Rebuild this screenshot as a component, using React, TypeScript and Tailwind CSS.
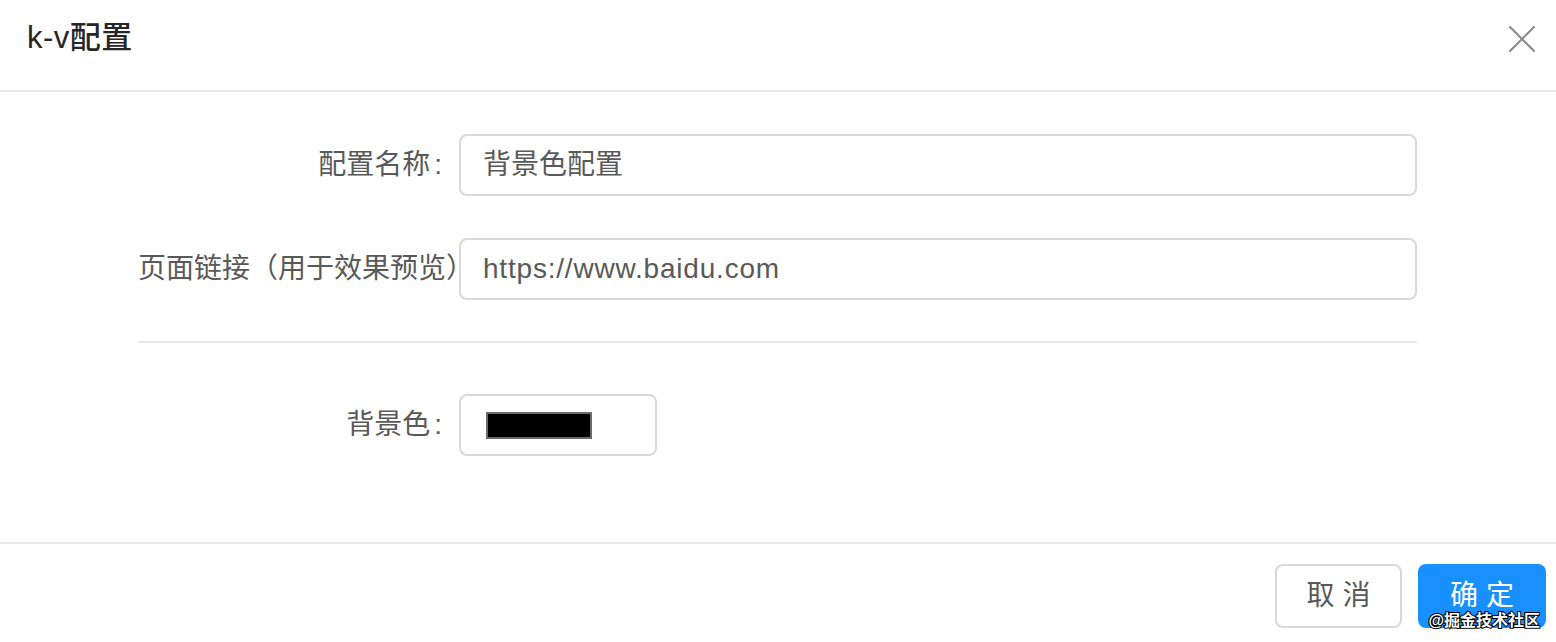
import { X } from "lucide-react";

const font = {
  fontFamily: '"Liberation Sans", "Noto Sans CJK SC", sans-serif',
};

function Label({ text, colon = true }: { text: string; colon?: boolean }) {
  return (
    <div className="w-[320px] shrink-0 whitespace-nowrap text-right text-[28px] leading-[62px] text-[#595959]">
      {text}
      {colon && <span className="ml-[4px] mr-[16px]">:</span>}
    </div>
  );
}

export default function App() {
  return (
    <div className="relative h-[642px] w-[1556px] bg-white" style={font}>
      {/* Header */}
      <div className="flex h-[92px] items-start justify-between border-b-2 border-[#e8e8e8] pl-[22px] pr-[10px]">
        <div className="flex h-[76px] items-center pl-[5px] text-[31px] font-medium tracking-[0.5px] text-[#262626]">
          k-v配置
        </div>
        <button className="mt-[15px] flex h-[48px] w-[48px] items-center justify-center text-[#8c8c8c]">
          <X size={48} strokeWidth={1.1} />
        </button>
      </div>

      {/* Body */}
      <div className="flex h-[450px] flex-col pl-[138px] pr-[139px] pt-[42px]">
        <div className="flex items-center">
          <Label text="配置名称" />
          <div className="ml-px flex h-[62px] flex-1 items-center rounded-[8px] border-2 border-[#d9d9d9] px-[22px] text-[28px] text-[#595959]">
            背景色配置
          </div>
        </div>

        <div className="mt-[42px] flex items-center">
          <Label text="页面链接（用于效果预览）" colon={false} />
          <div className="ml-px flex h-[62px] flex-1 items-center rounded-[8px] border-2 border-[#d9d9d9] px-[22px] text-[28px] tracking-[0.8px] text-[#595959]">
            https://www.baidu.com
          </div>
        </div>

        <div className="mt-[41px] h-[2px] bg-[#e8e8e8]" />

        <div className="mt-[51px] flex items-center">
          <Label text="背景色" />
          <div className="ml-px flex h-[62px] w-[198px] items-center rounded-[8px] border-2 border-[#d9d9d9] pl-[25px]">
            <div className="h-[27px] w-[106px] border-2 border-[#6b6b6b] bg-black" />
          </div>
        </div>
      </div>

      {/* Footer */}
      <div className="flex justify-end gap-[16px] border-t-2 border-[#e8e8e8] pr-[10px] pt-[20px]">
        <button className="h-[64px] w-[127px] rounded-[8px] border-2 border-[#d9d9d9] bg-white text-[28px] text-[#595959]">
          取 消
        </button>
        <button className="h-[64px] w-[128px] rounded-[8px] bg-[#1890ff] text-[28px] text-white">
          确 定
        </button>
      </div>

      {/* Watermark */}
      <div
        className="absolute bottom-[13px] right-[16px] text-[16px] font-bold leading-none text-white"
        style={{ WebkitTextStroke: "2px #000", paintOrder: "stroke fill" }}
      >
        @掘金技术社区
      </div>
    </div>
  );
}
